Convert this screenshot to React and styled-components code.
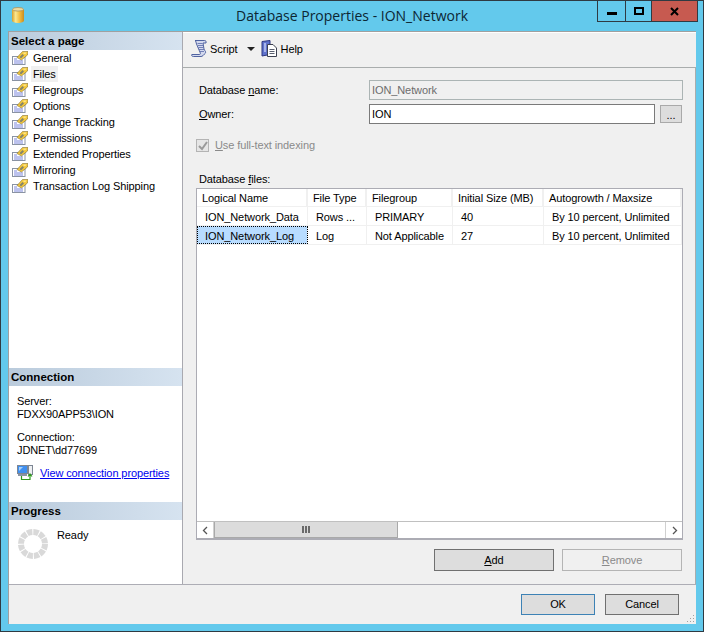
import React from "react";
import styled, { createGlobalStyle } from "styled-components";

const GlobalStyle = createGlobalStyle`
    html, body {
        margin: 0;
        padding: 0;
        background: #63c9ec;
    }
    * {
        box-sizing: border-box;
    }
`;

const UI_FONT = `"Liberation Sans", Arial, sans-serif`;

const Window = styled.div`
    width: 704px;
    height: 632px;
    background: #63c9ec;
    border: 1px solid #2f3a42;
    display: flex;
    flex-direction: column;
    font-family: ${UI_FONT};
    font-size: 11px;
    letter-spacing: -0.1px;
    color: #000;
`;
const TitleBar = styled.div`
    height: 30px;
    flex: none;
    display: grid;
    grid-template-columns: 1fr auto 1fr;
`;
const TitleIcon = styled.div`
    padding: 6px 0 0 11px;
`;
const TitleText = styled.div`
    font-family: "Open Sans", sans-serif;
    font-size: 14px;
    letter-spacing: 0;
    color: #0c2633;
    padding-top: 5px;
    line-height: 20px;
`;
const CaptionButtons = styled.div`
    display: flex;
    justify-content: flex-end;
    align-items: flex-start;
    padding-right: 5px;
`;
const CaptionButton = styled.div`
    width: ${p => p.$w}px;
    height: 22px;
    margin-top: -1px;
    background: ${p => (p.$close ? "#c75a50" : "transparent")};
    border: 1px solid #2f3a42;
    border-left-width: ${p => (p.$first ? 1 : 0)}px;
    display: flex;
    align-items: center;
    justify-content: center;
`;
const Client = styled.div`
    margin: 0 7px;
    height: 593px;
    flex: none;
    background: #f0f0f0;
    display: flex;
    flex-direction: column;
    border-top: 1px solid #a0a0a0;
    border-left: 1px solid #a0a0a0;
`;
const Main = styled.div`
    flex: 1;
    display: flex;
    min-height: 0;
    border-bottom: 1px solid #adadb5;
`;
const Sidebar = styled.div`
    width: 174px;
    flex: none;
    background: #fff;
    border-right: 1px solid #a9a9b0;
    display: flex;
    flex-direction: column;
`;
const SectionHead = styled.div`
    height: 18px;
    background: linear-gradient(to right, #bacbdc, #d6e3f0);
    font-size: 11.5px;
    letter-spacing: 0;
    font-weight: bold;
    line-height: 18px;
    padding-left: 2px;
    flex: none;
`;
const PageList = styled.div`
    flex: 1;
    padding-left: 3px;
`;
const PageRow = styled.div`
    height: 16px;
    display: flex;
    align-items: center;
    gap: 3px;
    white-space: nowrap;
`;
const PageLabel = styled.span`
    height: 16px;
    line-height: 16px;
    padding: 0 2px;
    background: ${p => (p.$hover ? "#f0f0f0" : "transparent")};
`;
const ConnectionBox = styled.div`
    height: 116px;
    flex: none;
    padding: 9px 0 0 8px;
    line-height: 13px;
`;
const InfoBlock = styled.div`
    margin-bottom: ${p => p.$mb}px;
`;
const LinkRow = styled.div`
    display: flex;
    align-items: center;
    gap: 7px;
`;
const Link = styled.a`
    color: #0000ee;
    text-decoration: underline;
`;
const ProgressBox = styled.div`
    height: 64px;
    flex: none;
    display: flex;
    align-items: flex-start;
    padding: 9px 0 0 9px;
    gap: 9px;
`;
const Content = styled.div`
    flex: 1;
    min-width: 0;
    display: flex;
    flex-direction: column;
`;
const Toolbar = styled.div`
    height: 36px;
    flex: none;
    display: flex;
    align-items: center;
    padding: 0 0 3px 8px;
    border-top: 1px solid #fff;
    border-bottom: 1px solid #a9adad;
`;
const ToolItem = styled.div`
    display: flex;
    align-items: center;
    gap: 3px;
`;
const DropArrow = styled.div`
    width: 0;
    height: 0;
    border-left: 4px solid transparent;
    border-right: 4px solid transparent;
    border-top: 4px solid #222;
    margin: 1px 6px 0 9px;
`;
const Panel = styled.div`
    flex: 1;
    min-height: 0;
    display: flex;
    flex-direction: column;
    padding: 12px 12px 0 13px;
    border-right: 1px solid #a9adad;
`;
const FieldRow = styled.div`
    display: flex;
    align-items: center;
    height: 20px;
    margin-bottom: 4px;
    padding-left: 3px;
`;
const FieldLabel = styled.div`
    width: 170px;
    flex: none;
`;
const TextInput = styled.div`
    flex: 1;
    height: 20px;
    line-height: 18px;
    padding-left: 2px;
    border: 1px solid ${p => (p.$disabled ? "#abb4b4" : "#7a7a7a")};
    background: ${p => (p.$disabled ? "#f0f0f0" : "#fff")};
    color: ${p => (p.$disabled ? "#6d6d6d" : "#000")};
`;
const BrowseButton = styled.div`
    width: 22px;
    height: 18px;
    margin: 0 1px 0 5px;
    background: #dddddd;
    border: 1px solid #a9a9a9;
    text-align: center;
    line-height: 18px;
`;
const CheckRow = styled.div`
    display: flex;
    align-items: flex-start;
    gap: 6px;
    margin-top: 11px;
    height: 13px;
    line-height: 12px;
    color: #8a8a8a;
`;
const CheckBox = styled.div`
    width: 13px;
    height: 13px;
    background: #e6e6e6;
    border: 1px solid #b4b4b4;
    display: flex;
    align-items: center;
    justify-content: center;
`;
const FilesLabel = styled.div`
    margin-top: 20px;
    padding-left: 3px;
    height: 16px;
    line-height: 14px;
`;
const Grid = styled.div`
    height: 352px;
    flex: none;
    background: #fff;
    border: 1px solid #acacb4;
    border-bottom-width: 2px;
    display: flex;
    flex-direction: column;
`;
const GridRows = styled.div`
    flex: 1;
`;
const GridRow = styled.div`
    display: grid;
    grid-template-columns: 111px 59px 86px 91px 1fr;
    height: ${p => (p.$head ? 18 : 19)}px;
    border-bottom: 1px solid #f0f0f0;
    white-space: nowrap;
`;
const HeadCell = styled.div`
    border-right: 2px solid #f0f0f0;
    padding-left: 5px;
    line-height: 18px;
    overflow: hidden;
`;
const Cell = styled.div`
    border-right: 1px solid #f0f0f0;
    padding-left: 8px;
    line-height: 20px;
    overflow: hidden;
    background: ${p => (p.$selected ? "#b8dcff" : "#fff")};
    outline: ${p => (p.$selected ? "1px dotted #000" : "none")};
    outline-offset: -1px;
`;
const ScrollBar = styled.div`
    height: 17px;
    flex: none;
    display: flex;
    border-top: 1px solid #c0c0c0;
`;
const ScrollButton = styled.div`
    width: 17px;
    flex: none;
    border-left: ${p => (p.$right ? "1px solid #d0d0d0" : "none")};
    border-right: ${p => (p.$right ? "none" : "1px solid #d0d0d0")};
    display: flex;
    align-items: center;
    justify-content: center;
`;
const ScrollThumb = styled.div`
    width: 184px;
    flex: none;
    background: #dcdcdc;
    border: 1px solid #a9a9a9;
    border-width: 0 1px 1px 1px;
    display: flex;
    align-items: center;
    justify-content: center;
    gap: 1px;
`;
const GripBar = styled.div`
    width: 2px;
    height: 7px;
    background: #6a6a6a;
`;
const ScrollTrack = styled.div`
    flex: 1;
`;
const GridButtons = styled.div`
    display: flex;
    justify-content: flex-end;
    gap: 8px;
    margin-top: 9px;
    padding-right: 1px;
`;
const Button = styled.div`
    width: ${p => p.$w}px;
    height: ${p => p.$h}px;
    background: ${p => (p.$disabled ? "#f0f0f0" : "#dddddd")};
    border: 1px solid ${p => (p.$disabled ? "#b4b4b4" : p.$default ? "#3d82b5" : "#707070")};
    color: ${p => (p.$disabled ? "#8a8a8a" : "#000")};
    text-align: center;
    line-height: ${p => p.$h - 2}px;
`;
const Footer = styled.div`
    height: 39px;
    flex: none;
    display: flex;
    justify-content: flex-end;
    align-items: flex-start;
    padding: 9px 17px 0 0;
    gap: 10px;
    position: relative;
`;
const ResizeGrip = styled.svg`
    position: absolute;
    right: 1px;
    bottom: 1px;
`;
const U = styled.span`
    text-decoration: underline;
`;

const PageIcon = () => (
    <svg width="16" height="14" viewBox="0 0 16 14">
        <rect x="0.5" y="5.5" width="12.500" height="8" fill="#fff" stroke="#8a93a3" />
        <path d="M2 8h3M2 10h9M2 12h9" stroke="#7a86dc" />
        <path d="M5 6.500L10.500 .5 16 .5 15.500 4 9.500 9z" fill="#f5c93c" stroke="#6f5c22" strokeWidth="0.5" />
        <path d="M7.500 6l3-3 1.500 1.500-3 3z" fill="#85856a" />
        <path d="M11.500 1.500h3l-1 1.500h-2z" fill="#fbe68c" />
    </svg>
);

const DbIcon = () => (
    <svg width="12" height="16" viewBox="0 0 12 16">
        <defs>
            <linearGradient id="dbBody" x1="0" x2="1" y1="0" y2="0">
                <stop offset="0" stopColor="#d6a02e" />
                <stop offset="0.3" stopColor="#fbe78f" />
                <stop offset="0.65" stopColor="#f2bb3e" />
                <stop offset="1" stopColor="#c98c20" />
            </linearGradient>
        </defs>
        <path d="M0 2.500h12v11c0 1.400-2.700 2.500-6 2.500s-6-1.100-6-2.500z" fill="url(#dbBody)" />
        <ellipse cx="6" cy="2.300" rx="5.500" ry="1.800" fill="#efdca0" stroke="#a8905c" strokeWidth="0.8" />
    </svg>
);

const ScriptIcon = () => (
    <svg width="16" height="17" viewBox="0 0 16 17">
        <path d="M4 .5h9.500c1.300 0 2 1 1.500 2.500h-3l1 6c.2 1 1 1.500 1.500 2.500.4 1-.2 2-1 2.500-.9 1-2 2.500-3.500 2.500H2.500C1 16.500.2 15.500.8 14.500h7.700c.8 0 1-.7.8-1.500L5.500 4C5 2.500 5 1 4 .5z" fill="#d3d9ee" stroke="#3f5496" strokeWidth="0.9" />
        <path d="M6.500 3.500h5M7 5.500h5M7.500 7.500h5M8 9.500h5M9 11.500h4" stroke="#5a6aa8" strokeWidth="0.8" />
    </svg>
);

const HelpIcon = () => (
    <svg width="17" height="17" viewBox="0 0 17 17">
        <path d="M1 1.500l8-1v14l-8 1.500z" fill="#5f72cc" stroke="#2c3680" />
        <rect x="3" y="3" width="2" height="9" fill="#a7b4ea" />
        <path d="M6.500 4.500h5.500l3.500 3.500v8.500h-9z" fill="#fff" stroke="#3c4150" />
        <path d="M8.500 9.500h5M8.500 11.500h5M8.500 13.500h5" stroke="#5a6070" />
    </svg>
);

const ConnIcon = () => (
    <svg width="16" height="16" viewBox="0 0 16 16">
        <rect x="0.5" y="0.5" width="10" height="8" fill="#3f8ff0" stroke="#7d8694" />
        <path d="M2 2h4L2 6z" fill="#a9d2fa" />
        <rect x="11.500" y="0.500" width="4" height="9" fill="#eef0f2" stroke="#7d8694" />
        <path d="M1 10h9" stroke="#8a93a3" strokeWidth="2" />
        <path d="M4.500 11v3.500h8.500v-5M11 11.500l2-2.500 2 2.500" fill="none" stroke="#2f9a1f" strokeWidth="1.200" />
    </svg>
);

const Spinner = () => (
    <svg width="30" height="30" viewBox="0 0 30 30">
        <circle cx="15" cy="15" r="12" fill="none" stroke="#d9d9d9" strokeWidth="6" strokeDasharray="5.28 1" />
    </svg>
);

const pages = [
    "General", "Files", "Filegroups", "Options", "Change Tracking",
    "Permissions", "Extended Properties", "Mirroring", "Transaction Log Shipping",
];

export default function App() {
    return (
        <Window>
            <GlobalStyle />
            <TitleBar>
                <TitleIcon><DbIcon /></TitleIcon>
                <TitleText>Database Properties - ION_Network</TitleText>
                <CaptionButtons>
                    <CaptionButton $w={29} $first>
                        <svg width="10" height="10" viewBox="0 0 10 10"><rect y="6" width="10" height="3" /></svg>
                    </CaptionButton>
                    <CaptionButton $w={26}>
                        <svg width="10" height="9" viewBox="0 0 10 9"><path fillRule="evenodd" d="M0 0h10v8H0zM2 2v4h6V2z" /></svg>
                    </CaptionButton>
                    <CaptionButton $w={46} $close>
                        <svg width="9" height="9" viewBox="0 0 9 9"><path d="M1 1l7 7M8 1L1 8" stroke="#000" strokeWidth="2" /></svg>
                    </CaptionButton>
                </CaptionButtons>
            </TitleBar>
            <Client>
                <Main>
                    <Sidebar>
                        <SectionHead>Select a page</SectionHead>
                        <PageList>
                            {pages.map(p => (
                                <PageRow key={p}>
                                    <PageIcon />
                                    <PageLabel $hover={p === "Files"}>{p}</PageLabel>
                                </PageRow>
                            ))}
                        </PageList>
                        <SectionHead>Connection</SectionHead>
                        <ConnectionBox>
                            <InfoBlock $mb={10}>Server:<br />FDXX90APP53\ION</InfoBlock>
                            <InfoBlock $mb={8}>Connection:<br />JDNET\dd77699</InfoBlock>
                            <LinkRow><ConnIcon /><Link>View connection properties</Link></LinkRow>
                        </ConnectionBox>
                        <SectionHead>Progress</SectionHead>
                        <ProgressBox><Spinner />Ready</ProgressBox>
                    </Sidebar>
                    <Content>
                        <Toolbar>
                            <ToolItem><ScriptIcon />Script</ToolItem>
                            <DropArrow />
                            <ToolItem><HelpIcon />Help</ToolItem>
                        </Toolbar>
                        <Panel>
                            <FieldRow>
                                <FieldLabel>Database <U>n</U>ame:</FieldLabel>
                                <TextInput $disabled>ION_Network</TextInput>
                            </FieldRow>
                            <FieldRow>
                                <FieldLabel><U>O</U>wner:</FieldLabel>
                                <TextInput>ION</TextInput>
                                <BrowseButton>...</BrowseButton>
                            </FieldRow>
                            <CheckRow>
                                <CheckBox>
                                    <svg width="10" height="10" viewBox="0 0 10 10"><path d="M1 5l3 3 5-7" fill="none" stroke="#9a9a9a" strokeWidth="2" /></svg>
                                </CheckBox>
                                <span><U>U</U>se full-text indexing</span>
                            </CheckRow>
                            <FilesLabel>Database <U>f</U>iles:</FilesLabel>
                            <Grid>
                                <GridRows>
                                    <GridRow $head>
                                        <HeadCell>Logical Name</HeadCell>
                                        <HeadCell>File Type</HeadCell>
                                        <HeadCell>Filegroup</HeadCell>
                                        <HeadCell>Initial Size (MB)</HeadCell>
                                        <HeadCell>Autogrowth / Maxsize</HeadCell>
                                    </GridRow>
                                    <GridRow>
                                        <Cell>ION_Network_Data</Cell>
                                        <Cell>Rows ...</Cell>
                                        <Cell>PRIMARY</Cell>
                                        <Cell>40</Cell>
                                        <Cell>By 10 percent, Unlimited</Cell>
                                    </GridRow>
                                    <GridRow>
                                        <Cell $selected>ION_Network_Log</Cell>
                                        <Cell>Log</Cell>
                                        <Cell>Not Applicable</Cell>
                                        <Cell>27</Cell>
                                        <Cell>By 10 percent, Unlimited</Cell>
                                    </GridRow>
                                </GridRows>
                                <ScrollBar>
                                    <ScrollButton>
                                        <svg width="7" height="9" viewBox="0 0 7 9"><path d="M5 1L1.5 4.5 5 8" fill="none" stroke="#555" strokeWidth="1.3" /></svg>
                                    </ScrollButton>
                                    <ScrollThumb><GripBar /><GripBar /><GripBar /></ScrollThumb>
                                    <ScrollTrack />
                                    <ScrollButton $right>
                                        <svg width="7" height="9" viewBox="0 0 7 9"><path d="M2 1l3.5 3.5L2 8" fill="none" stroke="#555" strokeWidth="1.3" /></svg>
                                    </ScrollButton>
                                </ScrollBar>
                            </Grid>
                            <GridButtons>
                                <Button $w={120} $h={22}><U>A</U>dd</Button>
                                <Button $w={120} $h={22} $disabled><U>R</U>emove</Button>
                            </GridButtons>
                        </Panel>
                    </Content>
                </Main>
                <Footer>
                    <Button $w={74} $h={21} $default>OK</Button>
                    <Button $w={74} $h={21}>Cancel</Button>
                    <ResizeGrip width="10" height="10" viewBox="0 0 10 10">
                        <path d="M8 2h1v1H8zM5 5h1v1H5zM8 5h1v1H8zM2 8h1v1H2zM5 8h1v1H5zM8 8h1v1H8z" fill="#a0a0a0" />
                    </ResizeGrip>
                </Footer>
            </Client>
        </Window>
    );
}
